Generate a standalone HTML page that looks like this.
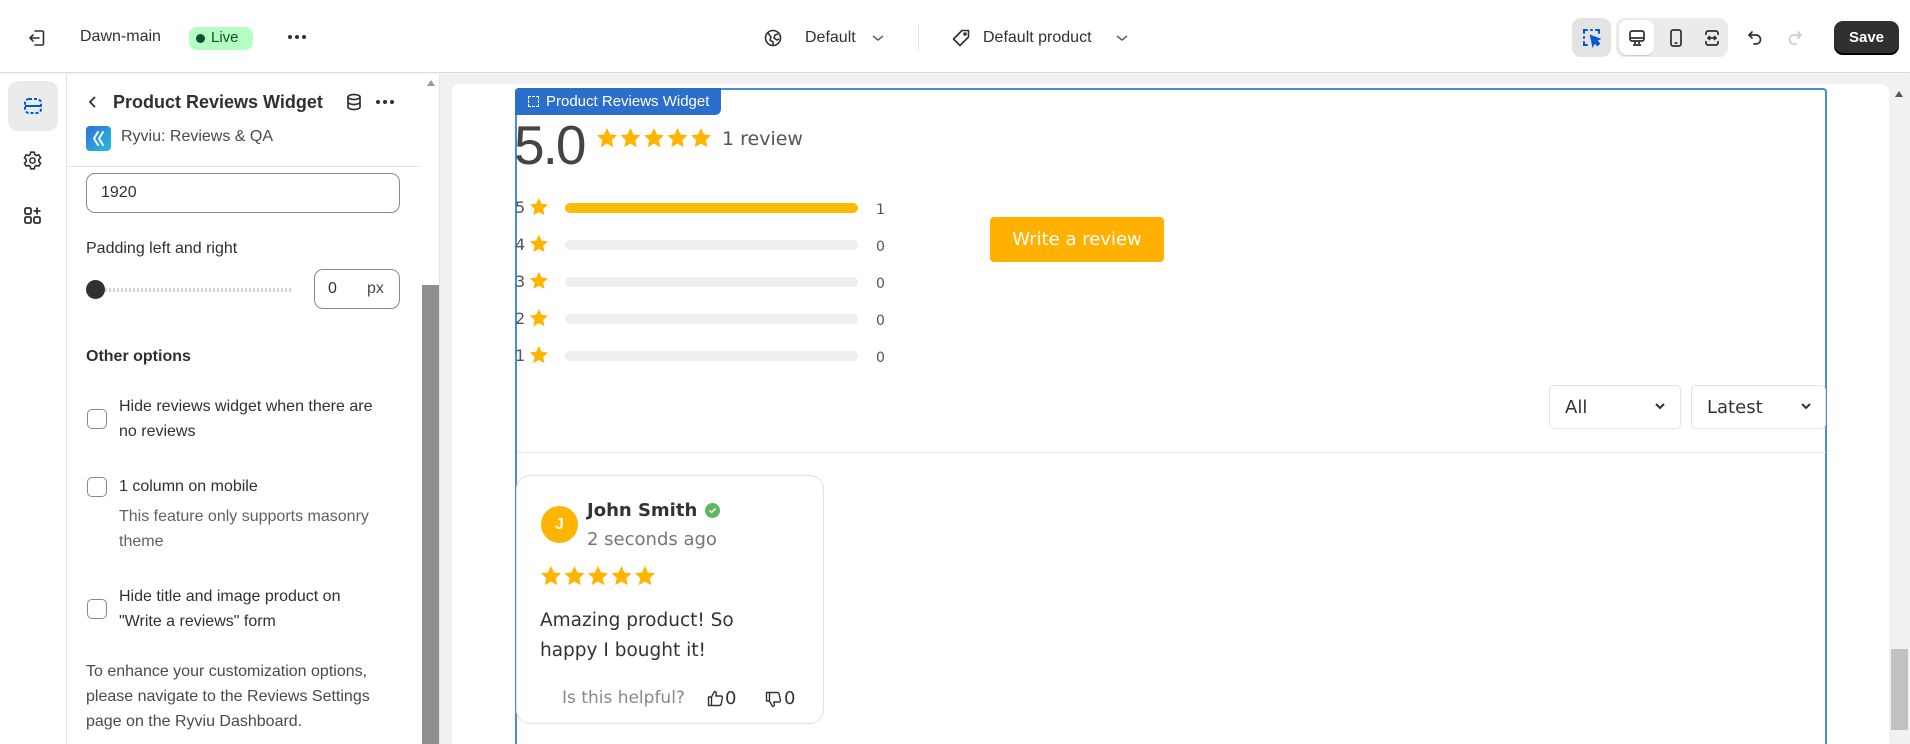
<!DOCTYPE html>
<html><head><meta charset="utf-8"><style>
*{box-sizing:border-box;margin:0;padding:0}
html{width:1910px;height:744px;overflow:hidden}
body{width:1910px;height:744px;overflow:hidden;background:#fff;font-family:"Liberation Sans",sans-serif;color:#303030;position:relative}
.a{position:absolute}
.t{white-space:nowrap}
svg{display:block}
.st{fill:#ffb400}
.bar{position:absolute;left:565px;width:293px;height:10px;border-radius:5px;background:#eee}
.cb{position:absolute;left:87px;width:20px;height:20px;border:1.5px solid #8a8a8a;border-radius:5px;background:#fff}
.lt{font-size:16px;color:#303030;line-height:25px}
.rv{font-family:"DejaVu Sans","Liberation Sans",sans-serif}
</style></head><body>
<!-- top bar -->
<div class="a" style="left:0;top:0;width:1910px;height:73px;background:#fff;border-bottom:1px solid #dcdcdc;box-shadow:0 1px 2px rgba(0,0,0,.06)"></div>
<svg class="a" style="left:27px;top:28px" width="20" height="20" viewBox="0 0 20 20" fill="none" stroke="#303030" stroke-width="1.6" stroke-linecap="round" stroke-linejoin="round"><path d="M8 3h7a1.5 1.5 0 0 1 1.5 1.5v11A1.5 1.5 0 0 1 15 17H8"/><path d="M12 10H3M6 7l-3 3 3 3"/></svg>
<div class="a t" style="left:80px;top:28px;font-size:16px">Dawn-main</div>
<div class="a" style="left:189px;top:27px;width:64px;height:23px;border-radius:8px;background:#b4fec2"></div>
<div class="a" style="left:196px;top:34px;width:9px;height:9px;border-radius:50%;background:#0c5132"></div>
<div class="a t" style="left:211px;top:29px;font-size:15px;color:#0c5132">Live</div>
<svg class="a" style="left:287px;top:34px" width="20" height="6" viewBox="0 0 20 6" fill="#303030"><circle cx="3" cy="3" r="2"/><circle cx="10" cy="3" r="2"/><circle cx="17" cy="3" r="2"/></svg>
<svg class="a" style="left:763px;top:28px" width="20" height="20" viewBox="0 0 20 20" fill="none" stroke="#303030" stroke-width="1.6"><circle cx="10" cy="10" r="7.5"/><path d="M5 5l3 4-1 3 3 2v3.5M15 6l-3 1-1 3 3 2 2-1"/></svg>
<div class="a t" style="left:805px;top:29px;font-size:16px">Default</div>
<svg class="a" style="left:871px;top:33px" width="14" height="10" viewBox="0 0 14 10" fill="none" stroke="#616161" stroke-width="1.5"><path d="M2 3l5 4 5-4"/></svg>
<div class="a" style="left:918px;top:25px;width:1px;height:26px;background:#e3e3e3"></div>
<svg class="a" style="left:951px;top:28px" width="20" height="20" viewBox="0 0 20 20" fill="none" stroke="#303030" stroke-width="1.6" stroke-linejoin="round"><path d="M11 2.5h6.5V9L9 17.5 2.5 11z"/><circle cx="14" cy="6" r="1"/></svg>
<div class="a t" style="left:983px;top:29px;font-size:16px">Default product</div>
<svg class="a" style="left:1115px;top:33px" width="14" height="10" viewBox="0 0 14 10" fill="none" stroke="#616161" stroke-width="1.5"><path d="M2 3l5 4 5-4"/></svg>
<div class="a" style="left:1572px;top:18px;width:39px;height:39px;border-radius:9px;background:#e3e3e3"></div>
<svg class="a" style="left:1581px;top:27px" width="21" height="21" viewBox="0 0 21 21" fill="none" stroke="#005bd3" stroke-width="2"><path d="M3 6V3h3M10 3h1M15 3h3v3M3 10v1M3 15v3h3" stroke-linecap="round"/><path d="M10 9l8 3-3 1.5 3 3-1.5 1.5-3-3L12 18z" fill="#005bd3"/></svg>
<div class="a" style="left:1616px;top:18px;width:112px;height:39px;border-radius:9px;background:#ebebeb"></div>
<div class="a" style="left:1619px;top:20px;width:35px;height:35px;border-radius:8px;background:#fff;box-shadow:0 1px 1px rgba(0,0,0,.15)"></div>
<svg class="a" style="left:1627px;top:28px" width="20" height="20" viewBox="0 0 20 20" fill="none" stroke="#303030" stroke-width="1.7"><rect x="3" y="3" width="14" height="10" rx="2"/><path d="M3 10h14M8 13v3M12 13v3M6 17h8"/></svg>
<svg class="a" style="left:1666px;top:28px" width="20" height="20" viewBox="0 0 20 20" fill="none" stroke="#303030" stroke-width="1.7"><rect x="5" y="2" width="10" height="16" rx="2"/><path d="M8.5 15h3"/></svg>
<svg class="a" style="left:1702px;top:28px" width="20" height="20" viewBox="0 0 20 20" fill="none" stroke="#303030" stroke-width="1.7"><path d="M4 7V5a2 2 0 0 1 2-2h8a2 2 0 0 1 2 2v2M4 13v2a2 2 0 0 0 2 2h8a2 2 0 0 0 2-2v-2M6 10h8M8 8l-2 2 2 2M12 8l2 2-2 2"/></svg>
<svg class="a" style="left:1745px;top:28px" width="20" height="20" viewBox="0 0 20 20" fill="none" stroke="#303030" stroke-width="1.7" stroke-linecap="round"><path d="M7 4L4 7l3 3M4 7h7a4.5 4.5 0 0 1 0 9H9"/></svg>
<svg class="a" style="left:1785px;top:28px" width="20" height="20" viewBox="0 0 20 20" fill="none" stroke="#cccccc" stroke-width="1.7" stroke-linecap="round"><path d="M13 4l3 3-3 3M16 7H9a4.5 4.5 0 0 0 0 9h2"/></svg>
<div class="a" style="left:1834px;top:21px;width:65px;height:34px;border-radius:9px;background:#303030;box-shadow:inset 0 -2px 0 #000;color:#fff;font-weight:bold;font-size:15px;text-align:center;line-height:33px">Save</div>

<!-- icon rail -->
<div class="a" style="left:66px;top:74px;width:1px;height:670px;background:#e3e3e3"></div>
<div class="a" style="left:8px;top:81px;width:50px;height:50px;border-radius:10px;background:#ebebeb"></div>
<svg class="a" style="left:22px;top:95px" width="22" height="22" viewBox="0 0 22 22" fill="none" stroke="#005bd3" stroke-width="2" stroke-dasharray="3 2"><rect x="3" y="4" width="16" height="14" rx="4"/><path d="M3 11h16" stroke-dasharray="none"/></svg>
<svg class="a" style="left:22px;top:150px" width="21" height="21" viewBox="0 0 24 24" fill="none" stroke="#303030" stroke-width="1.8"><circle cx="12" cy="12" r="3"/><path d="M10 2.5h4l.6 2.7 2 1.2 2.6-.9 2 3.5-2 1.8v2.4l2 1.8-2 3.5-2.6-.9-2 1.2-.6 2.7h-4l-.6-2.7-2-1.2-2.6.9-2-3.5 2-1.8v-2.4l-2-1.8 2-3.5 2.6.9 2-1.2z"/></svg>
<svg class="a" style="left:22px;top:205px" width="21" height="21" viewBox="0 0 21 21" fill="none" stroke="#303030" stroke-width="1.8"><rect x="3" y="3" width="6" height="6" rx="1.5"/><rect x="3" y="12" width="6" height="6" rx="1.5"/><rect x="12" y="12" width="6" height="6" rx="1.5"/><path d="M15 2.5v7M11.5 6h7"/></svg>

<!-- left panel -->
<svg class="a" style="left:86px;top:95px" width="14" height="14" viewBox="0 0 14 14" fill="none" stroke="#303030" stroke-width="1.8"><path d="M9 2L4 7l5 5"/></svg>
<div class="a t" style="left:113px;top:92px;font-size:18px;font-weight:bold">Product Reviews Widget</div>
<svg class="a" style="left:344px;top:92px" width="20" height="20" viewBox="0 0 20 20" fill="none" stroke="#303030" stroke-width="1.7"><ellipse cx="10" cy="5" rx="6" ry="2.5"/><path d="M4 5v10c0 1.4 2.7 2.5 6 2.5s6-1.1 6-2.5V5M4 10c0 1.4 2.7 2.5 6 2.5s6-1.1 6-2.5"/></svg>
<svg class="a" style="left:375px;top:99px" width="20" height="6" viewBox="0 0 20 6" fill="#303030"><circle cx="3" cy="3" r="2"/><circle cx="10" cy="3" r="2"/><circle cx="17" cy="3" r="2"/></svg>
<div class="a" style="left:86px;top:126px;width:25px;height:25px;border-radius:4px;background:linear-gradient(135deg,#2f6fd6,#26c0e0)"></div>
<svg class="a" style="left:86px;top:126px" width="25" height="25" viewBox="0 0 25 25" fill="none" stroke="#fff" stroke-width="2" stroke-linecap="round"><path d="M12 6l-4 6.5 4 6.5M17 6l-4 6.5 4 6.5"/></svg>
<div class="a t" style="left:121px;top:128px;font-size:16px;color:#4a4a4a">Ryviu: Reviews &amp; QA</div>
<div class="a" style="left:66px;top:166px;width:354px;height:1px;background:#e3e3e3"></div>
<div class="a" style="left:86px;top:173px;width:314px;height:40px;border:1px solid #8a8a8a;border-radius:9px"></div>
<div class="a t" style="left:101px;top:184px;font-size:16px">1920</div>
<div class="a t" style="left:86px;top:240px;font-size:16px">Padding left and right</div>
<div class="a" style="left:105px;top:288px;width:188px;height:4px;background:repeating-linear-gradient(90deg,#d4d4d4 0 2px,transparent 2px 4px)"></div>
<div class="a" style="left:86px;top:280px;width:19px;height:19px;border-radius:50%;background:#303030"></div>
<div class="a" style="left:314px;top:269px;width:86px;height:40px;border:1px solid #8a8a8a;border-radius:9px"></div>
<div class="a t" style="left:328px;top:280px;font-size:16px">0</div>
<div class="a t" style="left:367px;top:280px;font-size:16px;color:#4a4a4a">px</div>
<div class="a t" style="left:86px;top:348px;font-size:16px;font-weight:bold">Other options</div>
<div class="cb" style="top:409px"></div>
<div class="a t lt" style="left:119px;top:394px">Hide reviews widget when there are<br>no reviews</div>
<div class="cb" style="top:477px"></div>
<div class="a t lt" style="left:119px;top:474px">1 column on mobile</div>
<div class="a t lt" style="left:119px;top:504px;color:#616161">This feature only supports masonry<br>theme</div>
<div class="cb" style="top:599px"></div>
<div class="a t lt" style="left:119px;top:584px">Hide title and image product on<br>"Write a reviews" form</div>
<div class="a t lt" style="left:86px;top:659px;color:#4a4a4a">To enhance your customization options,<br>please navigate to the Reviews Settings<br>page on the Ryviu Dashboard.</div>
<!-- left scrollbar -->
<div class="a" style="left:421px;top:74px;width:19px;height:670px;background:#fff;border-right:1px solid #e3e3e3"></div>
<div class="a" style="left:427px;top:80px;width:0;height:0;border-left:4px solid transparent;border-right:4px solid transparent;border-bottom:6px solid #9a9a9a"></div>
<div class="a" style="left:422px;top:285px;width:17px;height:459px;background:#8f8f8f"></div>

<!-- preview -->
<div class="a" style="left:440px;top:74px;width:1470px;height:670px;background:#f1f1f1"></div>
<div class="a" style="left:452px;top:84px;width:1437px;height:660px;background:#fff;border-radius:8px 8px 0 0"></div>
<div class="a" style="left:1889px;top:84px;width:21px;height:660px;background:#f1f1f1"></div>
<div class="a" style="left:1895px;top:91px;width:0;height:0;border-left:4px solid transparent;border-right:4px solid transparent;border-bottom:6px solid #555"></div>
<div class="a" style="left:1891px;top:649px;width:17px;height:81px;background:#c1c1c1"></div>

<div class="a" style="left:515px;top:88px;width:1312px;height:656px;border:2px solid #4a8ad8;border-bottom:none;border-radius:4px 4px 0 0"></div>
<div class="a" style="left:515px;top:88px;width:206px;height:27px;background:#2c6ecb;border-radius:4px 0 6px 0"></div>
<div class="a" style="left:528px;top:96px;width:11px;height:11px;border:1.5px dashed #fff"></div>
<div class="a t" style="left:546px;top:93px;font-size:15px;color:#fff">Product Reviews Widget</div>

<div class="a t" style="left:514px;top:113px;font-size:55px;color:#444;letter-spacing:-2px">5.0</div>
<svg class="a" style="left:596px;top:127px" width="116" height="22" viewBox="0 0 116 22"><defs><path id="s" d="M11 1l3 6.5 7 .8-5.2 4.8 1.4 7L11 16.6 4.8 20.1l1.4-7L1 8.3l7-.8z"/></defs><use href="#s" class="st"/><use href="#s" x="23.5" class="st"/><use href="#s" x="47" class="st"/><use href="#s" x="70.5" class="st"/><use href="#s" x="94" class="st"/></svg>
<div class="a t rv" style="left:722px;top:128px;font-size:19px;color:#555">1 review</div>

<div class="a rv" style="left:515px;top:189px;font-size:16px;color:#555;line-height:37px">5<br>4<br>3<br>2<br>1</div>
<svg class="a" style="left:529px;top:197px" width="22" height="180" viewBox="0 0 22 180"><use href="#s" y="0" transform="scale(.9)" class="st"/><use href="#s" y="41" transform="scale(.9)" class="st"/><use href="#s" y="82" transform="scale(.9)" class="st"/><use href="#s" y="123.5" transform="scale(.9)" class="st"/><use href="#s" y="164.5" transform="scale(.9)" class="st"/></svg>
<div class="bar" style="top:203px;background:#ffb900"></div>
<div class="bar" style="top:240px"></div>
<div class="bar" style="top:277px"></div>
<div class="bar" style="top:314px"></div>
<div class="bar" style="top:351px"></div>
<div class="a rv" style="left:876px;top:192px;font-size:14px;color:#555;line-height:37px">1<br>0<br>0<br>0<br>0</div>

<div class="a t rv" style="left:990px;top:217px;width:174px;height:45px;border-radius:4px;background:#ffb000;color:#fff;font-size:18px;text-align:center;line-height:45px">Write a review</div>

<div class="a" style="left:1549px;top:385px;width:132px;height:44px;border:1px solid #e3e3e3;border-radius:5px"></div>
<div class="a t rv" style="left:1565px;top:397px;font-size:18px;color:#333">All</div>
<svg class="a" style="left:1654px;top:401px" width="12" height="10" viewBox="0 0 12 10" fill="none" stroke="#333" stroke-width="2"><path d="M2 3l4 4 4-4"/></svg>
<div class="a" style="left:1691px;top:385px;width:135px;height:44px;border:1px solid #e3e3e3;border-radius:5px"></div>
<div class="a t rv" style="left:1707px;top:397px;font-size:18px;color:#333">Latest</div>
<svg class="a" style="left:1800px;top:401px" width="12" height="10" viewBox="0 0 12 10" fill="none" stroke="#333" stroke-width="2"><path d="M2 3l4 4 4-4"/></svg>
<div class="a" style="left:517px;top:452px;width:1309px;height:1px;background:#ebebeb"></div>

<div class="a" style="left:516px;top:475px;width:308px;height:249px;border:1px solid #e0e0e0;border-radius:14px"></div>
<div class="a" style="left:541px;top:506px;width:37px;height:37px;border-radius:50%;background:#ffb400;color:#fff;font-size:16px;font-weight:bold;text-align:center;line-height:37px">J</div>
<div class="a t rv" style="left:587px;top:500px;font-size:18px;color:#333;font-weight:bold">John Smith</div>
<div class="a" style="left:705px;top:503px;width:15px;height:15px;border-radius:50%;background:#5cb85c"></div>
<svg class="a" style="left:705px;top:503px" width="15" height="15" viewBox="0 0 15 15" fill="none" stroke="#fff" stroke-width="1.5"><path d="M4.5 7.5l2 2 4-4"/></svg>
<div class="a t rv" style="left:587px;top:529px;font-size:18px;color:#777">2 seconds ago</div>
<svg class="a" style="left:540px;top:565px" width="118" height="22" viewBox="0 0 118 22"><use href="#s" class="st"/><use href="#s" x="23.5" class="st"/><use href="#s" x="47" class="st"/><use href="#s" x="70.5" class="st"/><use href="#s" x="94" class="st"/></svg>
<div class="a t rv" style="left:540px;top:606px;font-size:18.5px;color:#333;line-height:30px">Amazing product! So<br>happy I bought it!</div>
<div class="a t rv" style="left:562px;top:688px;font-size:17px;color:#888">Is this helpful?</div>
<svg class="a" style="left:707px;top:690px" width="17" height="17" viewBox="0 0 17 17" fill="none" stroke="#333" stroke-width="1.4" stroke-linejoin="round"><path d="M1.5 7h3v8.5h-3zM4.5 7l3-5.5c1.3 0 2 .8 1.8 2L8.8 6h5.2c1 0 1.6.9 1.4 1.8l-1.3 6.3c-.2.8-.8 1.4-1.6 1.4H4.5"/></svg>
<div class="a t rv" style="left:725px;top:688px;font-size:18px;color:#333">0</div>
<svg class="a" style="left:765px;top:691px" width="17" height="17" viewBox="0 0 17 17" fill="none" stroke="#333" stroke-width="1.4" stroke-linejoin="round"><path d="M1.5 1.5h3V10h-3zM4.5 10l3 5.5c1.3 0 2-.8 1.8-2L8.8 11h5.2c1 0 1.6-.9 1.4-1.8L14.1 2.9c-.2-.8-.8-1.4-1.6-1.4H4.5"/></svg>
<div class="a t rv" style="left:784px;top:688px;font-size:18px;color:#333">0</div>
</body></html>
